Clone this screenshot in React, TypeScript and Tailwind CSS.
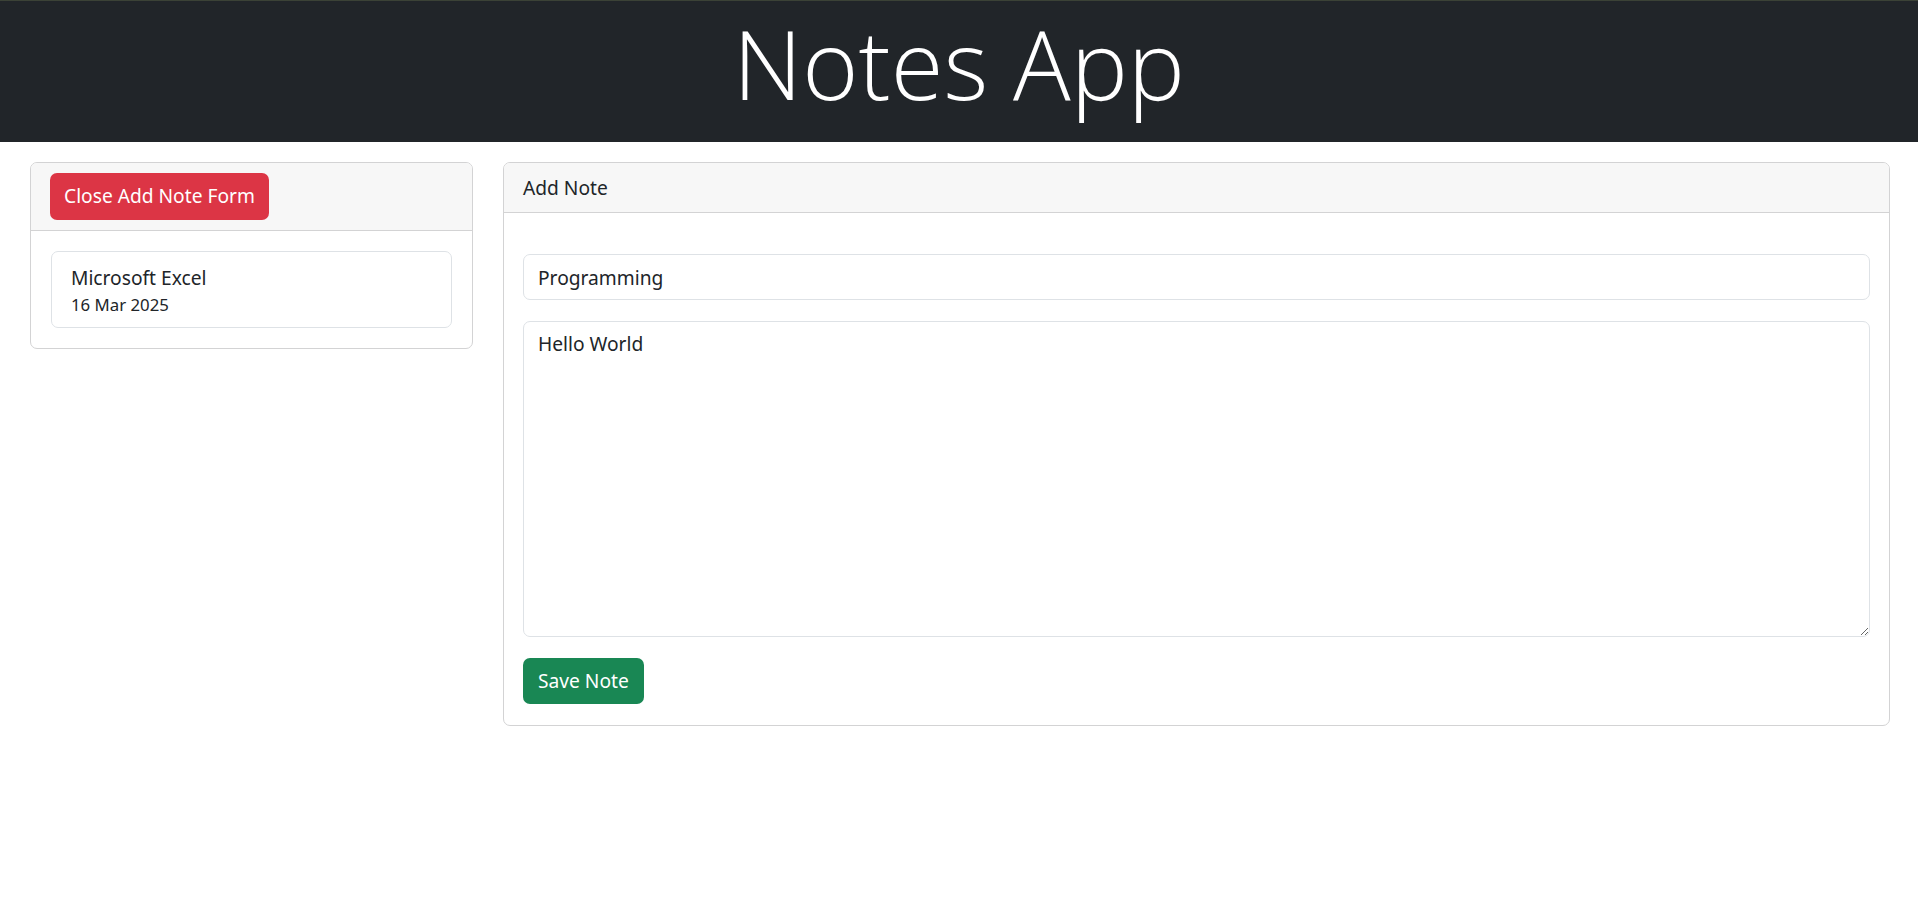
import React, { useState } from 'react';

interface Note {
  title: string;
  date: string;
}

const NOTES: Note[] = [{ title: 'Microsoft Excel', date: '16 Mar 2025' }];

// one saved note in the sidebar list
const NoteItem = ({ note }: { note: Note }) => {
  return (
    <div className="border border-[#dee2e6] rounded-[7px] px-[19px] pt-[11px] pb-[10px] bg-white">
      <div className="text-[19.2px] leading-[29px]">{note.title}</div>
      <div className="text-[16.8px] leading-[25px]">{note.date}</div>
    </div>
  );
};

const App = () => {
  const [title, setTitle] = useState('Programming');
  const [body, setBody] = useState('Hello World');

  return (
    <div className="min-h-screen bg-white text-[#212529] font-['Noto_Sans',sans-serif]">
      <header className="h-[142px] bg-[#212529] border-t border-[#3b4236] flex items-center justify-center">
        <h1 className="pb-[18px] text-[96px] leading-[1.2] font-light text-white font-['Open_Sans',sans-serif]">
          Notes App
        </h1>
      </header>

      <main className="flex items-start gap-[30px] pl-[30px] pr-[28px] pt-[20px]">
        {/* sidebar */}
        <section className="w-[443px] shrink-0 border border-[#d3d3d4] rounded-[7px] overflow-hidden">
          <div className="bg-[#f7f7f7] border-b border-[#d3d3d4] px-[19px] py-[10px]">
            <button className="h-[47px] px-[14px] rounded-[7px] bg-[#dc3545] text-white text-[19.2px]">
              Close Add Note Form
            </button>
          </div>
          <div className="p-[20px] flex flex-col gap-2">
            {NOTES.map((note) => (
              <NoteItem key={note.title} note={note} />
            ))}
          </div>
        </section>

        {/* form */}
        <section className="flex-1 border border-[#d3d3d4] rounded-[7px] overflow-hidden">
          <div className="bg-[#f7f7f7] border-b border-[#d3d3d4] px-[19px] py-[10px] text-[19.2px] leading-[29px]">
            Add Note
          </div>
          <div className="px-[19px] pt-[41px] pb-[21px] flex flex-col items-start">
            <input
              value={title}
              onChange={(e) => setTitle(e.target.value)}
              className="w-full h-[46px] border border-[#dee2e6] rounded-[7px] px-[14px] text-[19.2px] outline-none"
            />
            <textarea
              value={body}
              onChange={(e) => setBody(e.target.value)}
              className="w-full h-[316px] mt-[21px] border border-[#dee2e6] rounded-[7px] px-[14px] py-[7px] text-[19.2px] leading-[29px] outline-none"
            />
            <button className="mt-[21px] h-[46px] px-[15px] rounded-[7px] bg-[#198754] text-white text-[19.2px]">
              Save Note
            </button>
          </div>
        </section>
      </main>
    </div>
  );
};

export default App;
